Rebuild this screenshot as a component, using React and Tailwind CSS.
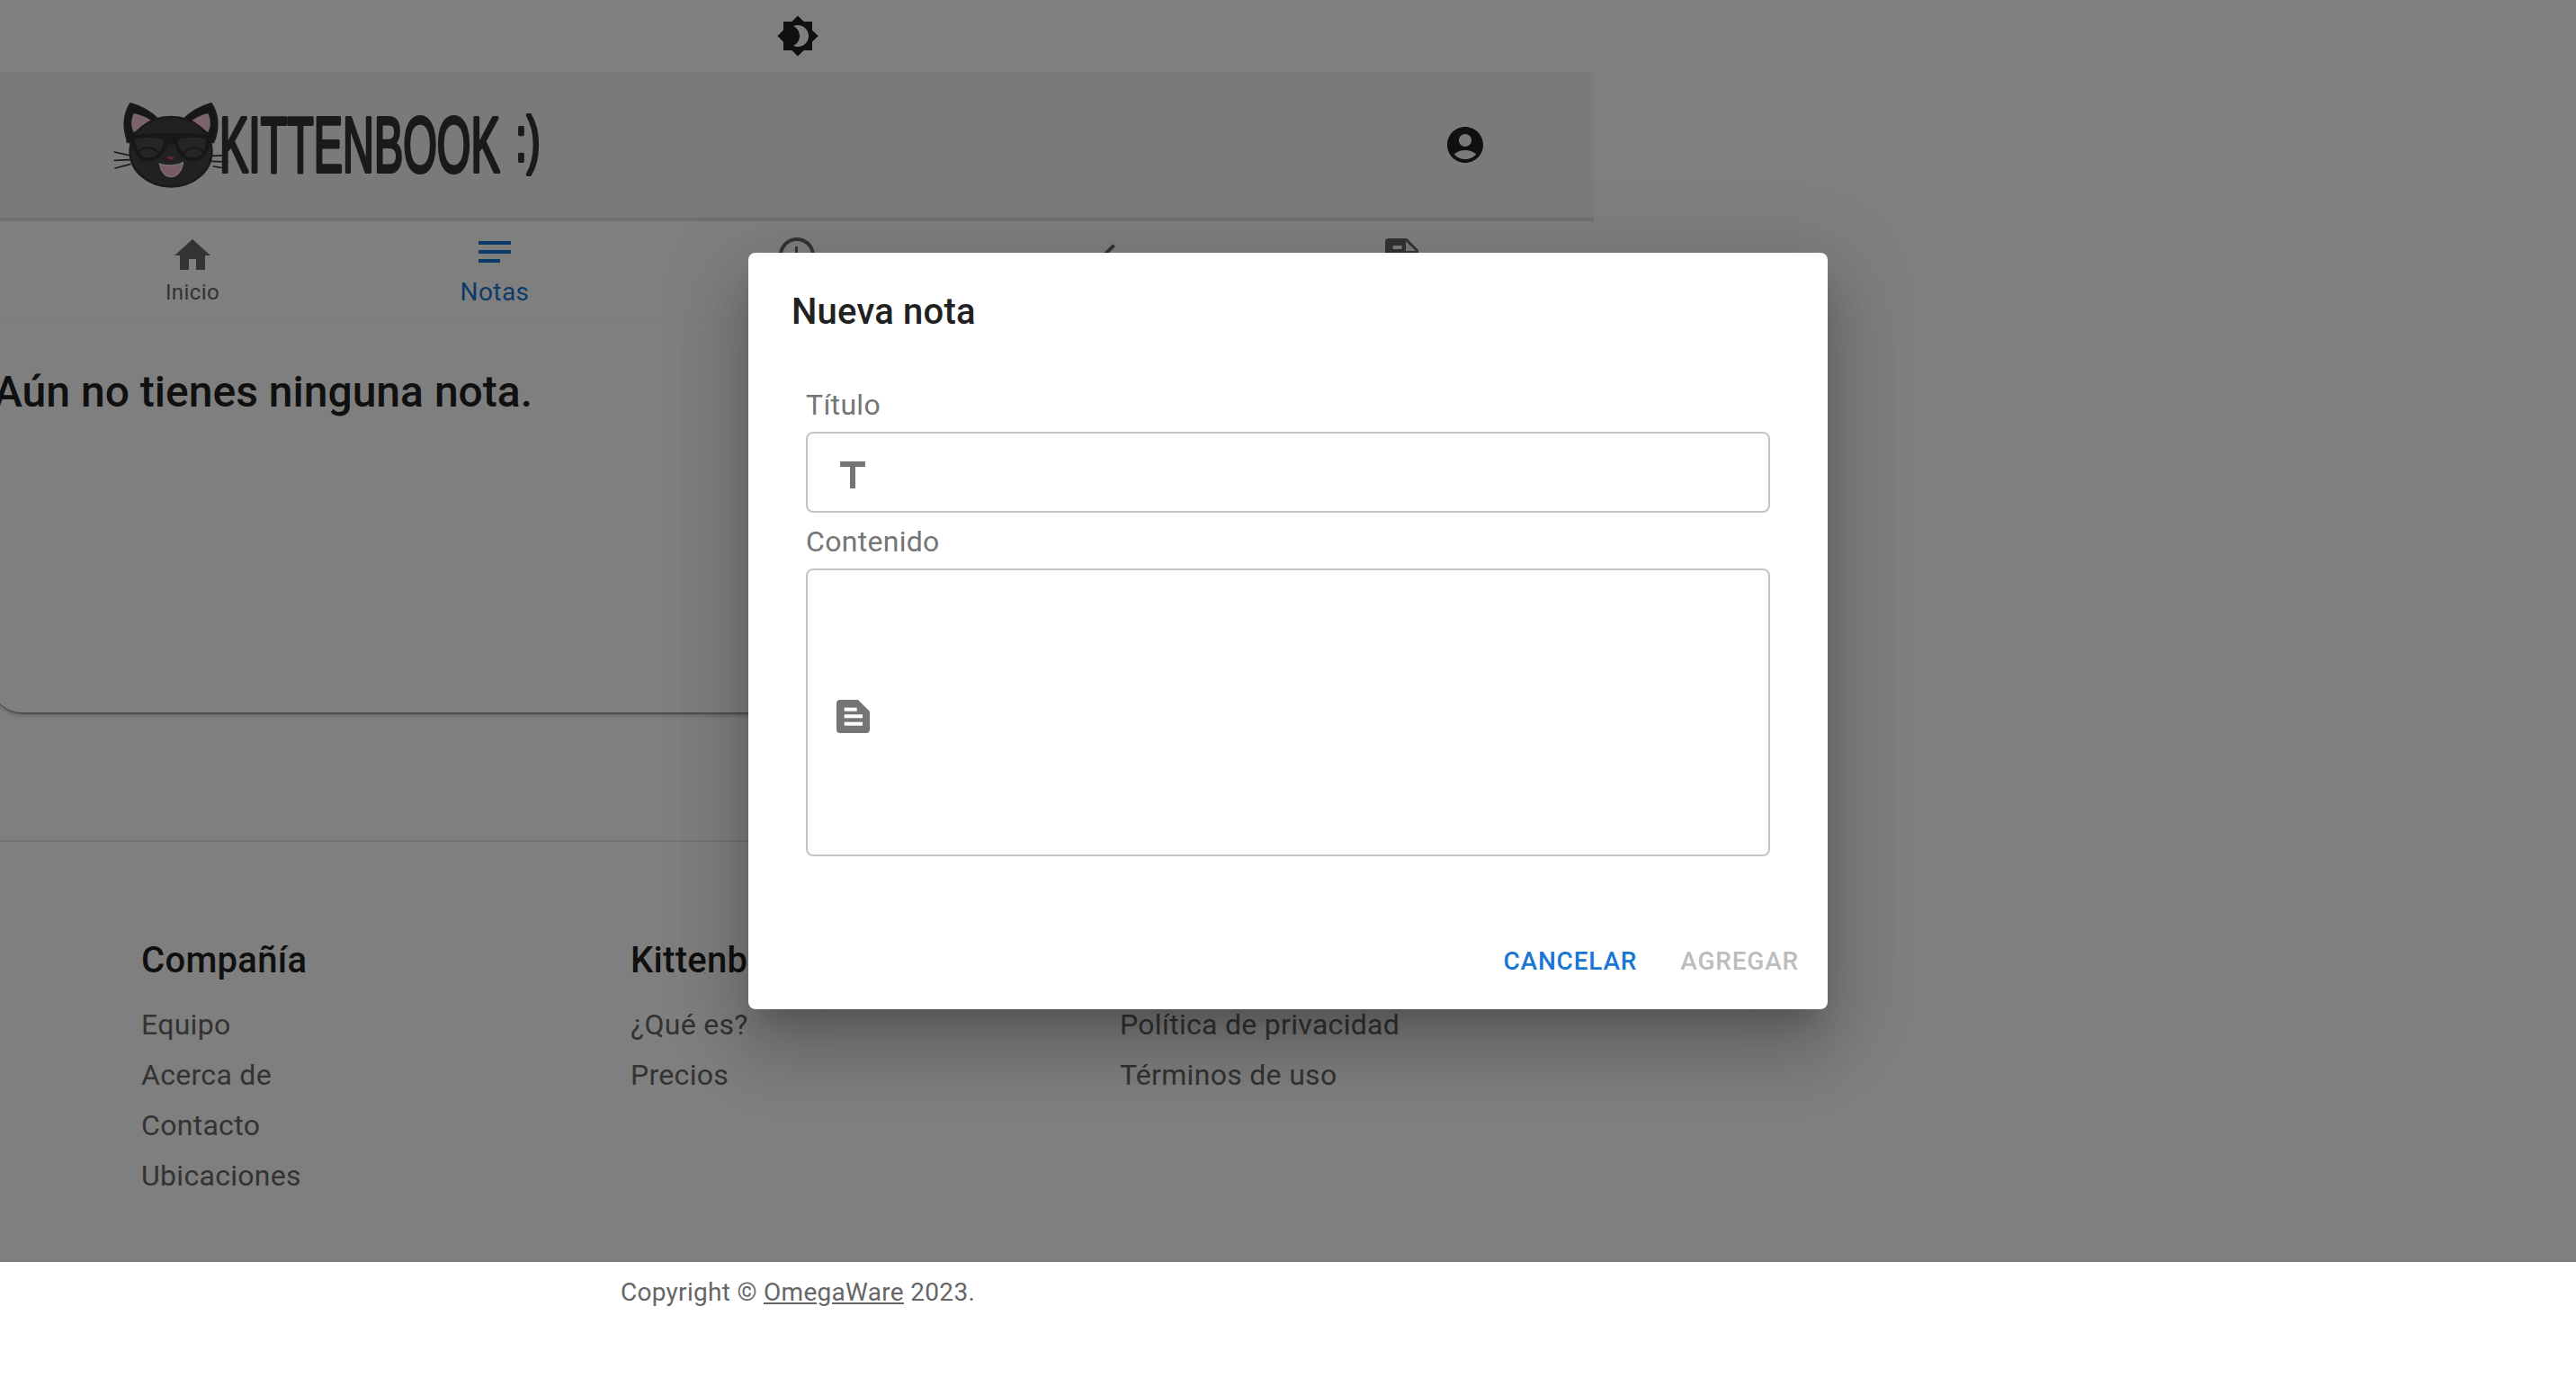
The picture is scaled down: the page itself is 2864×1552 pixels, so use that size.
import React from 'react';
import { MdBrightness4, MdAccountCircle, MdHome, MdNotes, MdAccessTime, MdCheck, MdTitle } from 'react-icons/md';

// logo coordinates are 3x the displayed size
const KittenLogo = () => (
  <svg viewBox="0 0 1560 390" className="w-[520px] h-[130px] shrink-0 mb-[12px]">
    <g stroke="#343434" strokeWidth="5" strokeLinecap="round" fill="none">
      <path d="M82 237 L130 248 M82 265 L132 263 M84 291 L134 278" />
      <path d="M408 250 L455 248 M408 268 L460 270 M412 285 L458 292" />
    </g>
    <path d="M135 75 C112 110 108 160 128 205 L412 205 C432 160 428 110 405 75 C370 85 335 105 312 128 C285 118 255 118 228 128 C205 105 170 85 135 75 Z" fill="#2e2e2e" stroke="#343434" strokeWidth="6" strokeLinejoin="round" />
    <path d="M146 108 C136 130 136 150 146 172 L205 132 C188 120 165 112 146 108 Z" fill="#f4c6d2" />
    <path d="M394 108 C404 130 404 150 394 172 L340 132 C357 120 375 112 394 108 Z" fill="#f4c6d2" />
    <ellipse cx="270" cy="236" rx="136" ry="116" fill="#424242" stroke="#343434" strokeWidth="8" />
    <path d="M125 185 C210 170 330 170 415 185 L408 205 L120 205 Z" fill="#2e2e2e" />
    <g fill="#4a4a4a" stroke="#2e2e2e" strokeWidth="12">
      <path d="M146 190 C180 178 235 182 252 192 C252 235 225 262 195 262 C165 262 146 235 146 190 Z" />
      <path d="M394 190 C360 178 305 182 288 192 C288 235 315 262 345 262 C375 262 394 235 394 190 Z" />
    </g>
    <path d="M252 205 L288 205" stroke="#2e2e2e" strokeWidth="12" />
    <g stroke="#2e2e2e" strokeWidth="7" fill="none" strokeLinecap="round">
      <path d="M160 238 C175 218 210 218 225 238" />
      <path d="M315 238 C330 218 365 218 380 238" />
    </g>
    <path d="M255 252 L285 252 L270 264 Z" fill="#d4415e" />
    <path d="M232 276 C250 284 290 284 310 272 C308 300 290 320 270 320 C250 320 236 300 232 276 Z" fill="#f2b8c6" stroke="#e8e8e8" strokeWidth="4" />
    <g fontWeight="400" fill="#343434" stroke="#343434" strokeWidth="12" strokeLinejoin="round" className="font-['Liberation_Sans',sans-serif]">
      <text x="432" y="304" textLength="935" lengthAdjust="spacingAndGlyphs" fontSize="262">KITTENBOOK</text>
      <text x="1420" y="266" textLength="82" lengthAdjust="spacingAndGlyphs" fontSize="212">:)</text>
    </g>
  </svg>
);

// square document glyph, the package's one is too narrow
const DocIcon = ({ fold, className }) => (
  <svg viewBox="0 0 37 37" className={className} fill="currentColor">
    <path d="M4 0H24L37 13V33a4 4 0 0 1-4 4H4a4 4 0 0 1-4-4V4a4 4 0 0 1 4-4Z" />
    {fold && <path d="M23 3V14H34Z" fill="#f5f5f5" />}
    <rect x="8.7" y={fold ? 8 : 8.7} width={fold ? 10 : 14} height="4" fill="#ffffff" />
    <rect x="8.7" y="16.3" width="20.3" height="4" fill="#ffffff" />
    <rect x="8.7" y="24.7" width="20.3" height="4" fill="#ffffff" />
  </svg>
);

const NavDoc = () => <DocIcon fold className="w-[37px] h-[37px] my-[5px]" />;

const navItems = [
  { label: 'Inicio', Icon: MdHome },
  { label: 'Notas', Icon: MdNotes, active: true },
  { Icon: MdAccessTime },
  { Icon: MdCheck },
  { Icon: NavDoc },
];

const footerCols = [
  { title: 'Compañía', links: ['Equipo', 'Acerca de', 'Contacto', 'Ubicaciones'] },
  { title: 'Kittenbook', links: ['¿Qué es?', 'Precios'] },
  { title: '', links: ['Política de privacidad', 'Términos de uso'] },
];

const App = () => {
  return (
    <div className="relative h-[1552px] overflow-hidden bg-white font-['Roboto',sans-serif]">
      {/* page under the dialog */}
      <div className="w-[1772px] flex flex-col">
        <div className="h-[80px] flex items-center justify-center text-[#212121] pl-[2px]">
          <MdBrightness4 size={48} />
        </div>

        <header className="h-[166px] bg-[#f5f5f5] border-b-4 border-[#e0e0e0] flex items-center justify-between pl-[100px] pr-[119px]">
          <KittenLogo />
          <MdAccountCircle size={48} className="text-[#212121]" />
        </header>

        <nav className="h-[112px] px-[46px] grid grid-cols-5">
          {navItems.map(({ label, Icon, active }, i) => (
            <div key={i} className={`flex flex-col items-center ${active ? 'pt-[10px] text-[#1976d2]' : 'pt-[14px] text-[#666666]'}`}>
              <Icon size={48} />
              {label && (
                <span className={active ? 'text-[28px] leading-[36px] mt-[3px] tracking-[0.4px]' : 'text-[24px] leading-[36px] -mt-[1px] tracking-[0.4px]'}>{label}</span>
              )}
            </div>
          ))}
        </nav>

        <section className="h-[436px] -ml-[8px] rounded-bl-[32px] border-b-2 border-[#9e9e9e] shadow-[0_2px_4px_rgba(0,0,0,0.2)]">
          <h2 className="ml-[1px] mt-[46px] text-[48px] leading-[64px] font-medium text-[#212121]">Aún no tienes ninguna nota.</h2>
        </section>

        <div className="h-[142px] border-b-2 border-[#e8e8e8]" />

        <footer className="h-[464px] pl-[157px] pr-[155px] pt-[104px] grid grid-cols-[544px_544px_1fr]">
          {footerCols.map((col, i) => (
            <div key={i}>
              <h3 className="h-[56px] text-[40px] leading-[56px] font-medium text-[#212121] tracking-[0.3px]">{col.title}</h3>
              <ul className="mt-[15px] flex flex-col">
                {col.links.map((link) => (
                  <li key={link} className="text-[32px] leading-[56px] text-[#666666] tracking-[0.3px]">{link}</li>
                ))}
              </ul>
            </div>
          ))}
        </footer>

        <p className="pt-[19px] pl-[2px] text-center text-[28px] leading-[36px] text-[#666666] tracking-[0.3px]">
          Copyright © <span className="underline">OmegaWare</span> 2023.
        </p>
      </div>

      {/* backdrop + dialog */}
      <div className="absolute left-0 right-0 top-0 h-[1403px] bg-black/50 flex items-center justify-center">
        <div className="w-[1200px] h-[841px] bg-white rounded-[8px] flex flex-col shadow-[0_22px_30px_-14px_rgba(0,0,0,0.2),0_48px_76px_6px_rgba(0,0,0,0.14),0_18px_92px_16px_rgba(0,0,0,0.12)]">
          <h2 className="pl-[48px] pt-[34px] text-[40px] leading-[64px] font-medium text-[#212121] tracking-[0.2px]">Nueva nota</h2>

          <div className="px-[64px] mt-[51px] flex-1 flex flex-col">
            <label className="text-[32px] leading-[40px] text-[#757575] tracking-[0.3px]">Título</label>
            <div className="mt-[10px] h-[90px] border-2 border-[#c4c4c4] rounded-[8px] flex items-center pl-[26px] text-[#757575]">
              <MdTitle size={48} className="mt-[7px]" />
            </div>
            <label className="mt-[12px] text-[32px] leading-[40px] text-[#757575] tracking-[0.3px]">Contenido</label>
            <div className="mt-[10px] h-[320px] border-2 border-[#c4c4c4] rounded-[8px] flex items-center pl-[32px] text-[#757575]">
              <DocIcon className="w-[37px] h-[37px] mt-[8px]" />
            </div>
          </div>

          <div className="pb-[29px] pr-[32px] flex justify-end gap-[48px] text-[28px] leading-[48px] font-medium tracking-[0.8px]">
            <button className="text-[#1976d2]">CANCELAR</button>
            <button className="text-[#bdbdbd]" disabled>AGREGAR</button>
          </div>
        </div>
      </div>
    </div>
  );
};

export default App;
